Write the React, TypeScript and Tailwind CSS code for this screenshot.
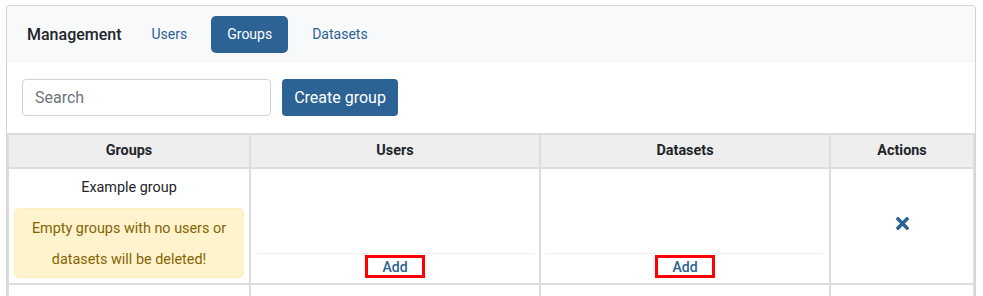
import React from 'react';

function TimesIcon() {
  return (
    <svg width="13" height="13" viewBox="0 80 352 352" fill="#2c6294">
      <path d="M242.72 256l100.07-100.07c12.28-12.28 12.28-32.19 0-44.48l-22.24-22.24c-12.28-12.28-32.19-12.28-44.48 0L176 189.28 75.93 89.21c-12.28-12.28-32.19-12.28-44.48 0L9.21 111.45c-12.28 12.28-12.28 32.19 0 44.48L109.28 256 9.21 356.07c-12.28 12.28-12.28 32.19 0 44.48l22.24 22.24c12.28 12.28 32.2 12.28 44.48 0L176 322.72l100.07 100.07c12.28 12.28 32.2 12.28 44.48 0l22.24-22.24c12.28-12.28 12.28-32.19 0-44.48L242.72 256z" />
    </svg>
  );
}

function AddCell() {
  return (
    <div className="flex h-full flex-col justify-end px-[6px] pb-[5px]">
      <div className="flex justify-center border-t border-[#eeeeee] pt-[1px]">
        <a className="flex h-[23px] w-[60px] items-center justify-center border-[3px] border-[#ff0000] text-[14px] leading-none font-medium text-[#2c6294]">
          Add
        </a>
      </div>
    </div>
  );
}

export default function App() {
  return (
    <div className="bg-white pt-[5px] pl-[6px] pr-[7px]" style={{ fontFamily: 'Roboto, "Liberation Sans", sans-serif' }}>
      <div className="overflow-hidden rounded-t-[4px] border border-[#d3d3d3] border-b-0">
        <div className="flex h-[57px] items-center bg-[#f8f9fa] pl-[20px]">
          <span className="mr-[14px] text-[16px] font-medium text-[#212529]">Management</span>
          <div className="flex gap-2">
            <span className="rounded-[4px] px-4 py-2 text-[14px] leading-[21px] text-[#2c6294]">Users</span>
            <span className="rounded-[5px] bg-[#2c6294] px-4 py-2 text-[14px] leading-[21px] text-white">Groups</span>
            <span className="rounded-[4px] px-4 py-2 text-[14px] leading-[21px] text-[#2c6294]">Datasets</span>
          </div>
        </div>

        <div className="flex items-center gap-[11px] pl-[15px] pt-[16px] pb-[17px]">
          <input
            placeholder="Search"
            className="h-[37px] w-[249px] rounded-[4px] border border-[#ced4da] px-3 text-[16px] text-[#495057] outline-none placeholder:text-[#6c757d]"
          />
          <button className="h-[37px] w-[116px] rounded-[4px] bg-[#2c6294] text-[16px] text-white">Create group</button>
        </div>

        <table className="w-full table-fixed border-collapse text-[14.4px] text-[#212529]">
          <colgroup>
            <col className="w-[242px]" />
            <col className="w-[290px]" />
            <col className="w-[290px]" />
            <col />
          </colgroup>
          <thead>
            <tr className="h-[34px] bg-[#eeeeee]">
              <th className="border-2 border-[#dddddd] font-bold">Groups</th>
              <th className="border-2 border-[#dddddd] font-bold">Users</th>
              <th className="border-2 border-[#dddddd] font-bold">Datasets</th>
              <th className="border-2 border-[#dddddd] font-bold">Actions</th>
            </tr>
          </thead>
          <tbody>
            <tr className="h-[116px]">
              <td className="border-2 border-[#dddddd] px-[5px] pt-[9px] pb-[4px] align-top">
                <div className="text-center leading-[20px]">Example group</div>
                <div className="mt-[10px] rounded-[5px] border border-[#ffeeba] bg-[#fff3cd] pt-[4px] pb-[2px] text-center leading-[31px] text-[#856404]">
                  Empty groups with no users or datasets will be deleted!
                </div>
              </td>
              <td className="h-[116px] border-2 border-[#dddddd] p-0">
                <AddCell />
              </td>
              <td className="h-[116px] border-2 border-[#dddddd] p-0">
                <AddCell />
              </td>
              <td className="border-2 border-[#dddddd] text-center align-middle">
                <span className="inline-flex">
                  <TimesIcon />
                </span>
              </td>
            </tr>
            <tr className="h-[40px]">
              <td className="border-2 border-[#dddddd]"></td>
              <td className="border-2 border-[#dddddd]"></td>
              <td className="border-2 border-[#dddddd]"></td>
              <td className="border-2 border-[#dddddd]"></td>
            </tr>
          </tbody>
        </table>
      </div>
    </div>
  );
}
